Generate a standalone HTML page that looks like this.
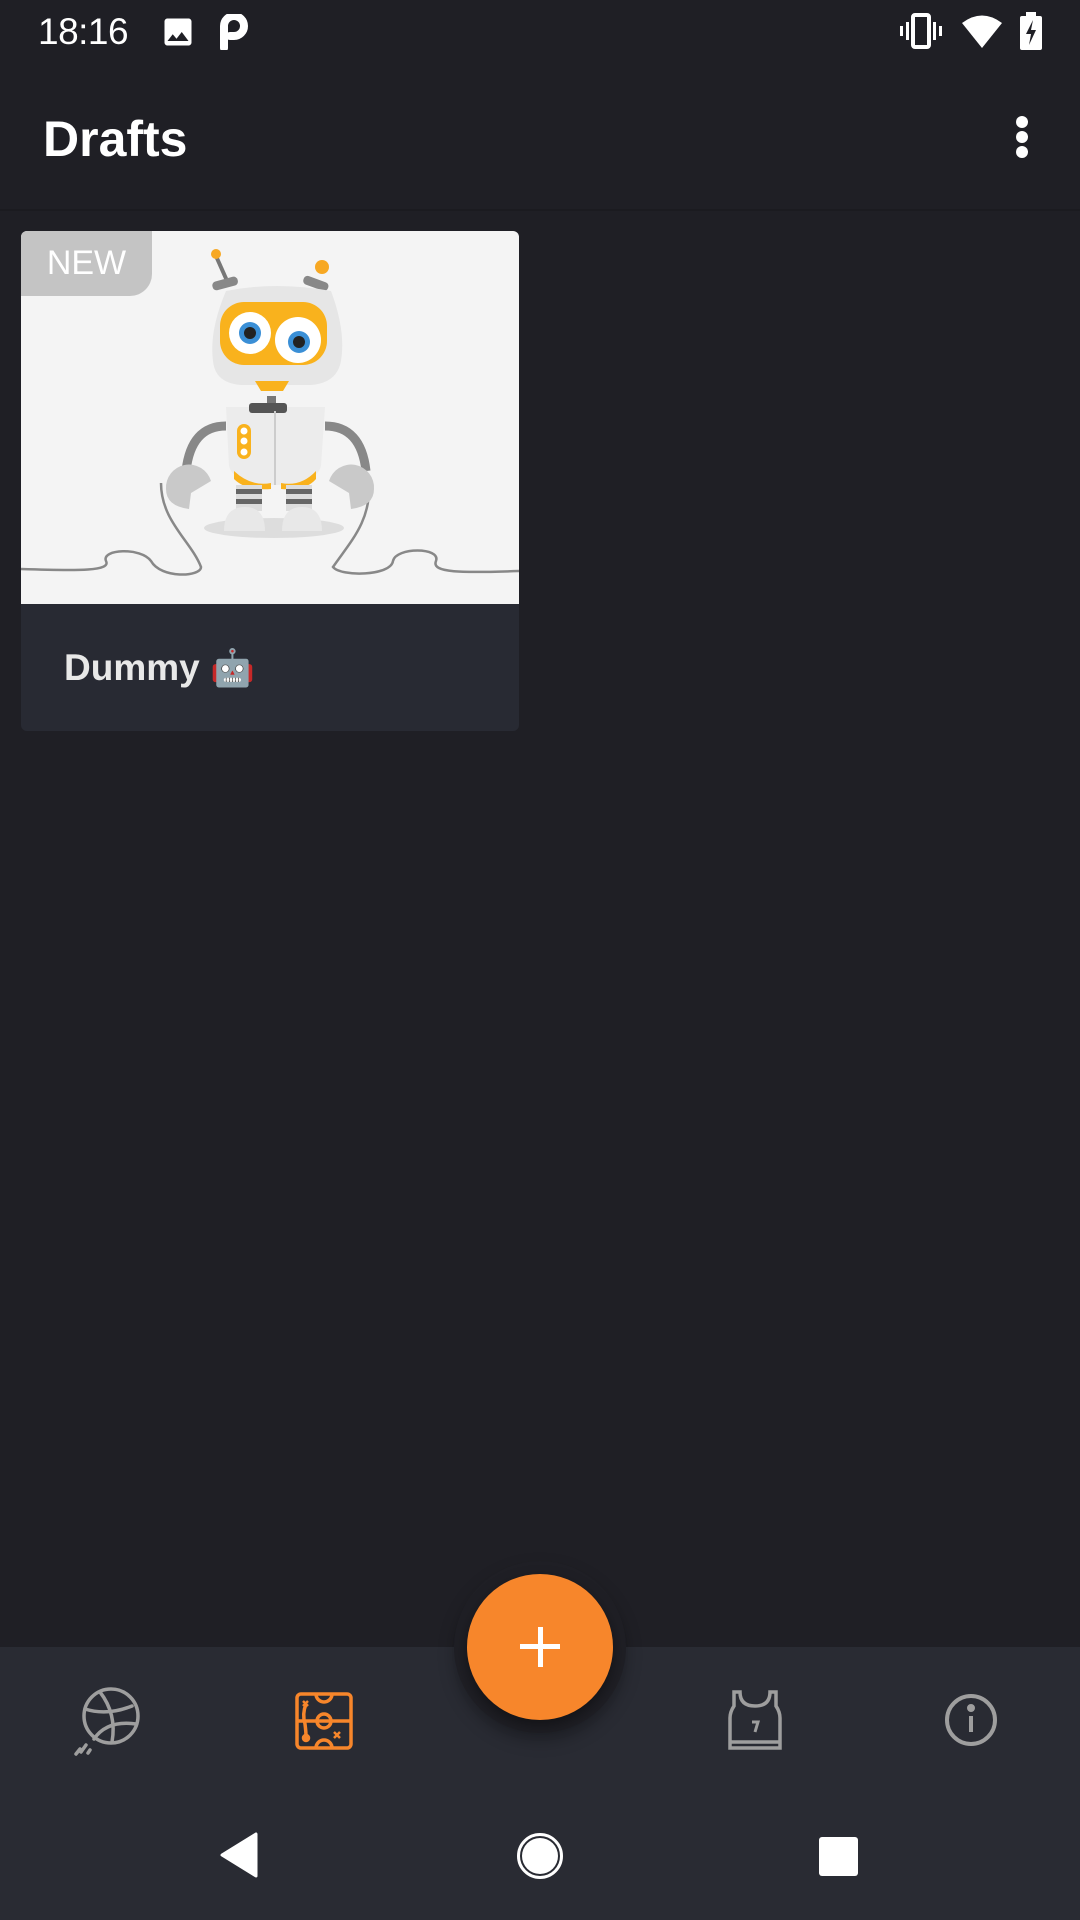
<!DOCTYPE html>
<html><head><meta charset="utf-8">
<style>
html,body{margin:0;padding:0;width:1080px;height:1920px;background:#1f1f25;overflow:hidden;font-family:"Liberation Sans",sans-serif;}
.abs{position:absolute}
</style></head>
<body>
<div class="abs" style="left:0;top:0;width:1080px;height:1920px;">
<!-- status bar -->
<div class="abs" style="left:38px;top:8px;font-size:37px;color:#fff;line-height:48px;letter-spacing:-0.5px;">18:16</div>
<svg class="abs" style="left:160px;top:14px" width="36" height="36" viewBox="0 0 24 24"><path fill="#fff" d="M21 19V5c0-1.1-.9-2-2-2H5c-1.1 0-2 .9-2 2v14c0 1.1.9 2 2 2h14c1.1 0 2-.9 2-2zM8.5 13.5l2.5 3 3.5-4.5 4.5 6H5l3.5-4.5z"/></svg>
<svg class="abs" style="left:220px;top:14px" width="30" height="36" viewBox="0 0 30 36"><path d="M4 34 L4 12 A10 10 0 1 1 14 22 L10 22" fill="none" stroke="#fff" stroke-width="8" stroke-linecap="round"/></svg>
<svg class="abs" style="left:900px;top:12px" width="48" height="40" viewBox="0 0 48 40"><rect x="13" y="3" width="16" height="32" rx="2" fill="none" stroke="#fff" stroke-width="4"/><rect x="6" y="10" width="3" height="18" fill="#fff"/><rect x="33" y="10" width="3" height="18" fill="#fff"/><rect x="0" y="14" width="3" height="10" fill="#fff"/><rect x="39" y="14" width="3" height="10" fill="#fff"/></svg>
<svg class="abs" style="left:962px;top:14px" width="40" height="34" viewBox="0 0 40 34"><path d="M0 9 Q20 -6 40 9 L20 34Z" fill="#fff"/></svg>
<svg class="abs" style="left:1020px;top:12px" width="22" height="38" viewBox="0 0 22 38"><rect x="6" y="0" width="10" height="4" fill="#fff"/><rect x="0" y="4" width="22" height="34" rx="2" fill="#fff"/><path d="M13 8 L6 22 L11 22 L9 33 L16 18 L11 18Z" fill="#1f1f25"/></svg>
<!-- toolbar -->
<div class="abs" style="left:43px;top:109px;font-size:50px;font-weight:bold;color:#fff;line-height:60px;">Drafts</div>
<div class="abs" style="left:1016px;top:116px;width:12px;height:12px;border-radius:6px;background:#fff"></div>
<div class="abs" style="left:1016px;top:131px;width:12px;height:12px;border-radius:6px;background:#fff"></div>
<div class="abs" style="left:1016px;top:146px;width:12px;height:12px;border-radius:6px;background:#fff"></div>
<div class="abs" style="left:0;top:209px;width:1080px;height:2px;background:#1b1b20"></div>
<!-- card -->
<div class="abs" style="left:21px;top:231px;width:498px;height:500px;border-radius:6px;background:#282a33;overflow:hidden;">
<svg class="abs" style="left:0;top:0" width="498" height="373" viewBox="0 0 498 373">
<rect width="498" height="373" fill="#f4f4f4"/>
<path d="M0 338 C60 340 90 340 85 330 C80 318 120 316 130 330 C140 348 180 346 180 336 C170 310 140 290 140 252" fill="none" stroke="#888" stroke-width="2.5"/>
<path d="M498 340 C440 342 410 342 415 330 C420 316 375 316 372 330 C370 345 320 346 312 336 C330 310 350 290 348 252" fill="none" stroke="#888" stroke-width="2.5"/>
<ellipse cx="253" cy="297" rx="70" ry="10" fill="#ddd"/>
<line x1="195" y1="25" x2="207" y2="52" stroke="#777" stroke-width="4"/><circle cx="195" cy="23" r="5" fill="#f7a823"/>
<rect x="191" y="48" width="26" height="9" rx="4" fill="#888" transform="rotate(-15 204 52)"/>
<rect x="282" y="48" width="26" height="9" rx="4" fill="#888" transform="rotate(20 295 52)"/>
<circle cx="301" cy="36" r="7" fill="#f7a823"/>
<path d="M205 60 Q255 50 310 60 Q325 100 320 130 Q316 152 290 154 L220 154 Q194 152 192 130 Q188 100 205 60Z" fill="#e6e6e6"/>
<rect x="199" y="71" width="107" height="63" rx="24" fill="#f9b21d"/>
<circle cx="229" cy="102" r="21" fill="#fff"/><circle cx="229" cy="102" r="11" fill="#3a8fd6"/><circle cx="229" cy="102" r="6" fill="#222"/>
<circle cx="277" cy="109" r="23" fill="#fff"/><circle cx="278" cy="111" r="11" fill="#3a8fd6"/><circle cx="278" cy="111" r="6" fill="#222"/>
<path d="M234 150 L268 150 L262 160 L240 160Z" fill="#f9b21d"/>
<rect x="246" y="165" width="9" height="16" fill="#777"/>
<path d="M205 195 Q170 195 165 240" fill="none" stroke="#888" stroke-width="9"/>
<path d="M304 195 Q340 195 345 240" fill="none" stroke="#888" stroke-width="9"/>
<path d="M145 258 A23 23 0 0 1 190 250 L170 262 L168 278 Q145 275 145 258Z" fill="#c9c9c9"/>
<path d="M353 258 A23 23 0 0 0 308 250 L328 262 L330 278 Q353 275 353 258Z" fill="#c9c9c9"/>
<path d="M205 176 L304 176 L300 235 Q295 254 254 254 Q213 254 208 235Z" fill="#ececec"/>
<rect x="228" y="172" width="38" height="10" rx="3" fill="#555"/>
<line x1="254" y1="180" x2="254" y2="254" stroke="#ccc" stroke-width="2"/>
<rect x="216" y="193" width="14" height="35" rx="7" fill="#f9b21d"/>
<circle cx="223" cy="200" r="3.5" fill="#fff"/><circle cx="223" cy="210" r="3.5" fill="#fff"/><circle cx="223" cy="221" r="3.5" fill="#fff"/>
<path d="M213 240 Q230 256 250 252 L250 258 Q225 260 213 248Z" fill="#f9b21d"/>
<path d="M295 240 Q280 256 260 252 L260 258 Q285 260 295 248Z" fill="#f9b21d"/>
<rect x="215" y="254" width="26" height="26" fill="#ddd"/><rect x="215" y="258" width="26" height="5" fill="#666"/><rect x="215" y="268" width="26" height="5" fill="#666"/>
<rect x="265" y="254" width="26" height="26" fill="#ddd"/><rect x="265" y="258" width="26" height="5" fill="#666"/><rect x="265" y="268" width="26" height="5" fill="#666"/>
<path d="M203 300 Q203 276 224 276 Q244 276 244 300Z" fill="#e8e8e8"/>
<path d="M261 300 Q261 276 281 276 Q301 276 301 300Z" fill="#e8e8e8"/>
</svg>
<div class="abs" style="left:0;top:0;width:131px;height:65px;background:#c4c4c4;border-bottom-right-radius:22px;color:#fff;font-size:34px;line-height:65px;text-align:center;">NEW</div>
<div class="abs" style="left:43px;top:413px;font-size:37px;font-weight:bold;color:#e8e8e8;line-height:48px;">Dummy <span style="font-family:'Noto Color Emoji','DejaVu Sans',sans-serif;font-size:36px;">🤖</span></div>
</div>
<!-- bottom bar -->
<div class="abs" style="left:0;top:1647px;width:1080px;height:273px;background:#292b33;"></div>
<div class="abs" style="left:454px;top:1561px;width:172px;height:172px;border-radius:86px;background:#1f1f25;box-shadow:0 8px 16px rgba(0,0,0,0.25)"></div>
<div class="abs" style="left:467px;top:1574px;width:146px;height:146px;border-radius:73px;background:#f7862b;box-shadow:0 6px 14px rgba(0,0,0,0.4)"></div>
<div class="abs" style="left:520px;top:1644px;width:40px;height:5px;background:#fff"></div>
<div class="abs" style="left:538px;top:1627px;width:5px;height:40px;background:#fff"></div>
<svg class="abs" style="left:72px;top:1684px" width="72" height="72" viewBox="0 0 72 72" fill="none" stroke="#9e9e9e" stroke-width="3.5" stroke-linecap="round">
<circle cx="39" cy="32" r="27"/><path d="M28 8 Q45 30 40 58"/><path d="M13 25 Q35 32 60 22"/><path d="M22 55 Q35 36 64 40"/>
<path d="M8 65 L4 70 M14 61 L9 68 M18 66 L16 69"/></svg>
<svg class="abs" style="left:294px;top:1692px" width="60" height="58" viewBox="0 0 60 58" fill="none" stroke="#f7862b" stroke-width="3.5">
<rect x="3" y="2" width="54" height="54" rx="4"/><line x1="3" y1="29" x2="57" y2="29"/><circle cx="30" cy="29" r="7"/>
<path d="M22 2 A8 8 0 0 0 38 2"/><path d="M22 56 A8 8 0 0 1 38 56"/>
<path d="M12 12 Q8 22 11 32 Q12 40 12 44" /><circle cx="12" cy="46" r="2.5" fill="#f7862b"/><path d="M40 40 L46 46 M46 40 L40 46" stroke-width="2.5"/><path d="M9 9 L14 14 M14 9 L9 14" stroke-width="2.5"/></svg>
<svg class="abs" style="left:728px;top:1690px" width="54" height="62" viewBox="0 0 54 62" fill="none" stroke="#9e9e9e" stroke-width="3.5">
<path d="M6 2 L6 16 Q2 22 2 28 L2 58 L52 58 L52 28 Q52 22 48 16 L48 2 L42 2 Q42 16 27 16 Q12 16 12 2Z"/><line x1="2" y1="52" x2="52" y2="52"/><path d="M24 32 L30 32 L27 42" stroke-width="3"/></svg>
<svg class="abs" style="left:944px;top:1693px" width="54" height="54" viewBox="0 0 54 54" fill="none" stroke="#9e9e9e" stroke-width="4">
<circle cx="27" cy="27" r="24"/><line x1="27" y1="23" x2="27" y2="39"/><circle cx="27" cy="15" r="2" fill="#9e9e9e"/></svg>
<svg class="abs" style="left:218px;top:1832px" width="40" height="46" viewBox="0 0 40 46"><path d="M38 2 L38 44 L4 23Z" fill="#fff" stroke="#fff" stroke-width="3" stroke-linejoin="round"/></svg>
<div class="abs" style="left:517px;top:1833px;width:40px;height:40px;border-radius:50%;border:3px solid #fff;"></div>
<div class="abs" style="left:522px;top:1838px;width:36px;height:36px;border-radius:50%;background:#fff;"></div>
<div class="abs" style="left:819px;top:1837px;width:39px;height:39px;border-radius:3px;background:#fff;"></div>
</div>
</body></html>
